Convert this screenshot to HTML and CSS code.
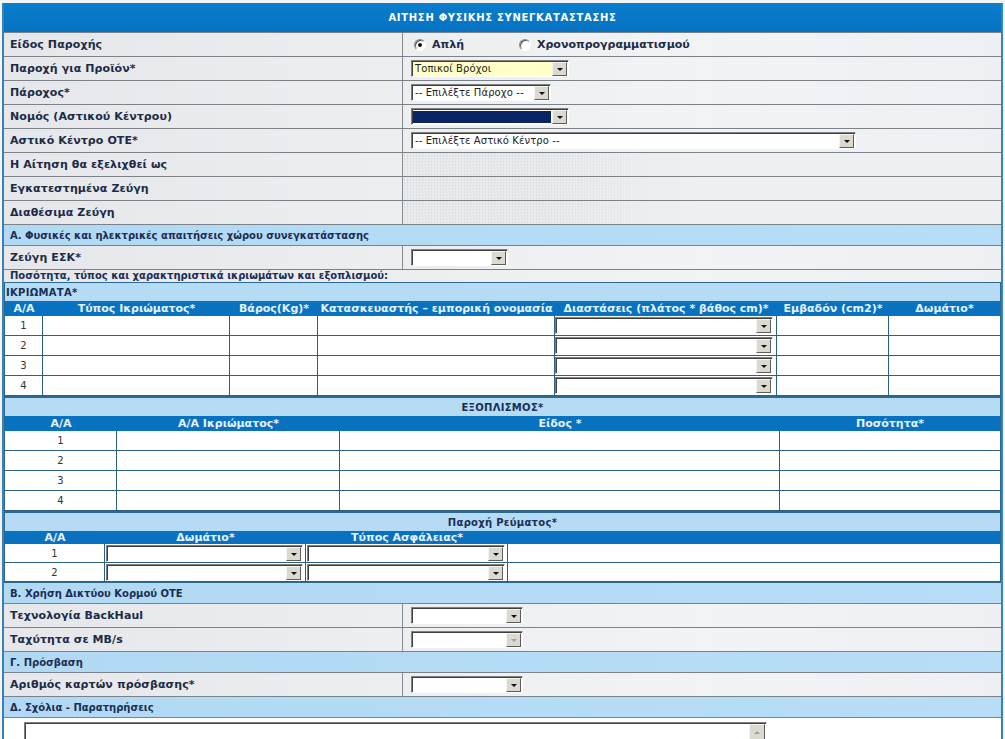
FILE: index.html
```html
<!DOCTYPE html>
<html lang="el">
<head>
<meta charset="utf-8">
<title>Αίτηση Φυσικής Συνεγκατάστασης</title>
<link rel="stylesheet" href="styles.css">
</head>
<body>
<div class="page">
  <div class="title">ΑΙΤΗΣΗ ΦΥΣΙΚΗΣ ΣΥΝΕΓΚΑΤΑΣΤΑΣΗΣ</div>

  <div class="row">
    <div class="lab">Είδος Παροχής</div>
    <div class="val">
      <span class="opt first"><span class="radio on"></span><span class="optlab">Απλή</span></span>
      <span class="opt"><span class="radio"></span><span class="optlab">Χρονοπρογραμματισμού</span></span>
    </div>
  </div>
  <div class="row">
    <div class="lab">Παροχή για Προϊόν*</div>
    <div class="val"><span class="sel yellow w158"><span class="txt">Τοπικοί Βρόχοι</span><span class="arr"><i></i></span></span></div>
  </div>
  <div class="row">
    <div class="lab">Πάροχος*</div>
    <div class="val"><span class="sel w140"><span class="txt">-- Επιλέξτε Πάροχο --</span><span class="arr"><i></i></span></span></div>
  </div>
  <div class="row">
    <div class="lab">Νομός (Αστικού Κέντρου)</div>
    <div class="val"><span class="sel navy w158"><span class="txt"></span><span class="arr"><i></i></span></span></div>
  </div>
  <div class="row">
    <div class="lab">Αστικό Κέντρο ΟΤΕ*</div>
    <div class="val"><span class="sel w445"><span class="txt">-- Επιλέξτε Αστικό Κέντρο --</span><span class="arr"><i></i></span></span></div>
  </div>
  <div class="row">
    <div class="lab">Η Αίτηση θα εξελιχθεί ως</div>
    <div class="val tex"></div>
  </div>
  <div class="row">
    <div class="lab">Εγκατεστημένα Ζεύγη</div>
    <div class="val tex"></div>
  </div>
  <div class="row">
    <div class="lab">Διαθέσιμα Ζεύγη</div>
    <div class="val tex"></div>
  </div>

  <div class="sec">Α. Φυσικές και ηλεκτρικές απαιτήσεις χώρου συνεγκατάστασης</div>
  <div class="row">
    <div class="lab">Ζεύγη ΕΣΚ*</div>
    <div class="val"><span class="sel w97"><span class="txt"></span><span class="arr"><i></i></span></span></div>
  </div>
  <div class="note">Ποσότητα, τύπος και χαρακτηριστικά ικριωμάτων και εξοπλισμού:</div>

  <div class="box">
    <div class="btitle">ΙΚΡΙΩΜΑΤΑ*</div>
    <div class="thead g1">
      <span>A/A</span><span>Τύπος Ικριώματος*</span><span>Βάρος(Kg)*</span><span>Κατασκευαστής – εμπορική ονομασία</span><span>Διαστάσεις (πλάτος * βάθος cm)*</span><span>Εμβαδόν (cm2)*</span><span>Δωμάτιο*</span>
    </div>
    <div class="trow g1"><span class="num">1</span><span></span><span></span><span></span><span class="cellsel"><span class="sel w218"><span class="txt"></span><span class="arr"><i></i></span></span></span><span></span><span></span></div>
    <div class="trow g1"><span class="num">2</span><span></span><span></span><span></span><span class="cellsel"><span class="sel w218"><span class="txt"></span><span class="arr"><i></i></span></span></span><span></span><span></span></div>
    <div class="trow g1"><span class="num">3</span><span></span><span></span><span></span><span class="cellsel"><span class="sel w218"><span class="txt"></span><span class="arr"><i></i></span></span></span><span></span><span></span></div>
    <div class="trow g1"><span class="num">4</span><span></span><span></span><span></span><span class="cellsel"><span class="sel w218"><span class="txt"></span><span class="arr"><i></i></span></span></span><span></span><span></span></div>
  </div>

  <div class="box">
    <div class="btitle c">ΕΞΟΠΛΙΣΜΟΣ*</div>
    <div class="thead g2">
      <span>A/A</span><span>A/A Ικριώματος*</span><span>Είδος *</span><span>Ποσότητα*</span>
    </div>
    <div class="trow g2"><span class="num">1</span><span></span><span></span><span></span></div>
    <div class="trow g2"><span class="num">2</span><span></span><span></span><span></span></div>
    <div class="trow g2"><span class="num">3</span><span></span><span></span><span></span></div>
    <div class="trow g2"><span class="num">4</span><span></span><span></span><span></span></div>
  </div>

  <div class="box">
    <div class="btitle c">Παροχή Ρεύματος*</div>
    <div class="thead g3 short">
      <span>A/A</span><span>Δωμάτιο*</span><span>Τύπος Ασφάλειας*</span><span></span>
    </div>
    <div class="trow g3 r19"><span class="num">1</span><span class="cellsel pad1"><span class="sel w197"><span class="txt"></span><span class="arr"><i></i></span></span></span><span class="cellsel pad1"><span class="sel w198"><span class="txt"></span><span class="arr"><i></i></span></span></span><span></span></div>
    <div class="trow g3 r19"><span class="num">2</span><span class="cellsel pad1"><span class="sel w197"><span class="txt"></span><span class="arr"><i></i></span></span></span><span class="cellsel pad1"><span class="sel w198"><span class="txt"></span><span class="arr"><i></i></span></span></span><span></span></div>
  </div>

  <div class="sec nob">Β. Χρήση Δικτύου Κορμού ΟΤΕ</div>
  <div class="row">
    <div class="lab">Τεχνολογία BackHaul</div>
    <div class="val"><span class="sel w112"><span class="txt"></span><span class="arr"><i></i></span></span></div>
  </div>
  <div class="row">
    <div class="lab">Ταχύτητα σε MB/s</div>
    <div class="val"><span class="sel w112 dis"><span class="txt"></span><span class="arr"><i></i></span></span></div>
  </div>
  <div class="sec">Γ. Πρόσβαση</div>
  <div class="row">
    <div class="lab">Αριθμός καρτών πρόσβασης*</div>
    <div class="val"><span class="sel w112"><span class="txt"></span><span class="arr"><i></i></span></span></div>
  </div>
  <div class="sec">Δ. Σχόλια - Παρατηρήσεις</div>
  <div class="comments">
    <div class="tarea"><div class="tspace"></div><div class="vscroll"><span class="sbtn"><i></i></span></div></div>
  </div>
</div>
</body>
</html>
```

FILE: styles.css
```css
* { box-sizing: border-box; }

body {
  margin: 0;
  background: #f3f5f7;
  font-family: "DejaVu Sans", Verdana, sans-serif;
}

.page {
  margin: 3px 2px 0 2px;
  border-left: 2px solid #3a82b5;
  border-right: 2px solid #3a82b5;
  background: linear-gradient(90deg, #e5e7ea 0%, #eceef0 40%, #f1f3f5 70%, #eef0f3 100%);
}

.title {
  height: 29px;
  background: linear-gradient(#0a7dcc, #0672c2);
  color: #ffffff;
  font-weight: bold;
  font-size: 10px;
  letter-spacing: 0.7px;
  display: flex;
  align-items: center;
  justify-content: center;
}

.row {
  display: grid;
  grid-template-columns: 399px 1fr;
  height: 24px;
  border-top: 1px solid #7b8289;
}

.lab {
  border-right: 1px solid #858b92;
  padding-left: 6px;
  display: flex;
  align-items: center;
  font-weight: bold;
  font-size: 11px;
  letter-spacing: 0.1px;
  color: #1c2b47;
  white-space: nowrap;
}

.val {
  display: flex;
  align-items: center;
  padding-left: 8px;
}

.val.tex {
  background-color: #e6e8eb;
  background-image:
    linear-gradient(90deg, rgba(238,240,242,0) 0px, rgba(238,240,242,0) 140px, rgba(238,240,242,1) 300px),
    repeating-conic-gradient(#e0e3e6 0 25%, #eceef0 0 50%);
  background-size: 100% 100%, 3px 3px;
}

/* radios */
.opt {
  display: inline-flex;
  align-items: center;
  gap: 6px;
}
.opt.first {
  margin-left: 3px;
  width: 105px;
}
.radio {
  width: 12px;
  height: 12px;
  border-radius: 50%;
  border: 1px solid;
  border-color: #8a8a8a #ffffff #ffffff #8a8a8a;
  box-shadow: inset 1px 1px 0 #555;
  background: #ffffff;
  display: inline-flex;
  align-items: center;
  justify-content: center;
}
.radio.on::after {
  content: "";
  width: 4px;
  height: 4px;
  border-radius: 50%;
  background: #111;
}
.optlab {
  font-weight: bold;
  font-size: 11px;
  color: #1c2b47;
}

/* select boxes */
.sel {
  display: inline-flex;
  align-items: stretch;
  height: 17px;
  border: 1px solid;
  border-color: #7f7f7f #ffffff #ffffff #7f7f7f;
  box-shadow: inset 1px 1px 0 #404040;
  background: #ffffff;
  padding: 1px 1px 0 1px;
}
.sel .txt {
  flex: 1;
  font-family: "DejaVu Sans", Tahoma, sans-serif;
  font-size: 10px;
  letter-spacing: 0.1px;
  line-height: 14px;
  padding-left: 2px;
  color: #222;
  white-space: nowrap;
  overflow: hidden;
}
.sel.yellow .txt { background: #ffffc6; }
.sel.navy .txt { background: #0a2466; margin: 1px 1px 1px 0; }
.sel .arr {
  width: 15px;
  height: 14px;
  flex: none;
  background: #dcd9d0;
  border: 1px solid;
  border-color: #f6f5f1 #5c5c5c #5c5c5c #f6f5f1;
  display: flex;
  align-items: center;
  justify-content: center;
}
.sel .arr i {
  width: 0;
  height: 0;
  border-left: 3px solid transparent;
  border-right: 3px solid transparent;
  border-top: 3px solid #111;
  margin-top: 1px;
}
.sel.dis .arr i { border-top-color: #a3a3a3; }

.w97 { width: 97px; }
.w112 { width: 112px; }
.w140 { width: 140px; }
.w158 { width: 158px; }
.w197 { width: 197px; }
.w198 { width: 198px; }
.w218 { width: 218px; }
.w445 { width: 445px; }

/* sections */
.sec {
  height: 21px;
  border-top: 1px solid #7b8289;
  background: linear-gradient(90deg, #b2d9f3, #b7ddf7);
  padding-left: 6px;
  display: flex;
  align-items: center;
  font-weight: bold;
  font-size: 10px;
  color: #1a2e55;
}
.sec.nob { border-top: none; height: 20px; }

.note {
  height: 13px;
  border-top: 1px solid #7b8289;
  padding-left: 6px;
  font-weight: bold;
  font-size: 10px;
  line-height: 12px;
  color: #1a2e55;
  white-space: nowrap;
}

/* boxes */
.box {
  border: 1px solid #2b6990;
  background: #ffffff;
}

.btitle {
  height: 18px;
  background: #b5dbf5;
  font-weight: bold;
  font-size: 10px;
  color: #1a2e55;
  display: flex;
  align-items: center;
  padding-left: 1px;
  letter-spacing: 0.3px;
}
.btitle.c { justify-content: center; padding-left: 0; }

.thead {
  display: grid;
  height: 15px;
  background: #0872c1;
  color: #e6f3ff;
  font-weight: bold;
  font-size: 11px;
  align-items: center;
}
.thead.short { height: 13px; }
.thead span {
  text-align: center;
  white-space: nowrap;
  overflow: hidden;
  line-height: 13px;
}

.trow {
  display: grid;
  height: 20px;
  border-bottom: 1px solid #2d6184;
}
.trow.r19 { height: 19px; }
.trow > span {
  border-right: 1px solid #2d6184;
}
.trow > span:last-child { border-right: none; }

.num {
  font-size: 10px;
  color: #333;
  display: flex;
  align-items: center;
  justify-content: center;
}

.cellsel {
  display: flex;
  align-items: center;
}
.cellsel.pad1 { padding-left: 1px; }

.g1 { grid-template-columns: 38px 187px 88px 237px 222px 112px 1fr; }
.g2 { grid-template-columns: 112px 223px 440px 1fr; }
.g3 { grid-template-columns: 100px 201px 202px 1fr; }

/* comments */
.comments {
  border-top: 1px solid #7b8289;
  background: #ffffff;
  padding: 4px 0 0 20px;
  height: 60px;
}
.tarea {
  width: 743px;
  height: 48px;
  display: flex;
  border: 1px solid;
  border-color: #7f7f7f #ffffff #ffffff #7f7f7f;
  box-shadow: inset 1px 1px 0 #404040;
  background: #ffffff;
  padding: 1px 1px 0 1px;
}
.tspace { flex: 1; }
.vscroll {
  width: 16px;
  background: #f2f1ec;
}
.sbtn {
  display: flex;
  width: 16px;
  height: 16px;
  background: #dcd9d0;
  border: 1px solid;
  border-color: #f6f5f1 #5c5c5c #5c5c5c #f6f5f1;
  align-items: center;
  justify-content: center;
}
.sbtn i {
  width: 0;
  height: 0;
  border-left: 3px solid transparent;
  border-right: 3px solid transparent;
  border-bottom: 3px solid #a0a0a0;
}
```
